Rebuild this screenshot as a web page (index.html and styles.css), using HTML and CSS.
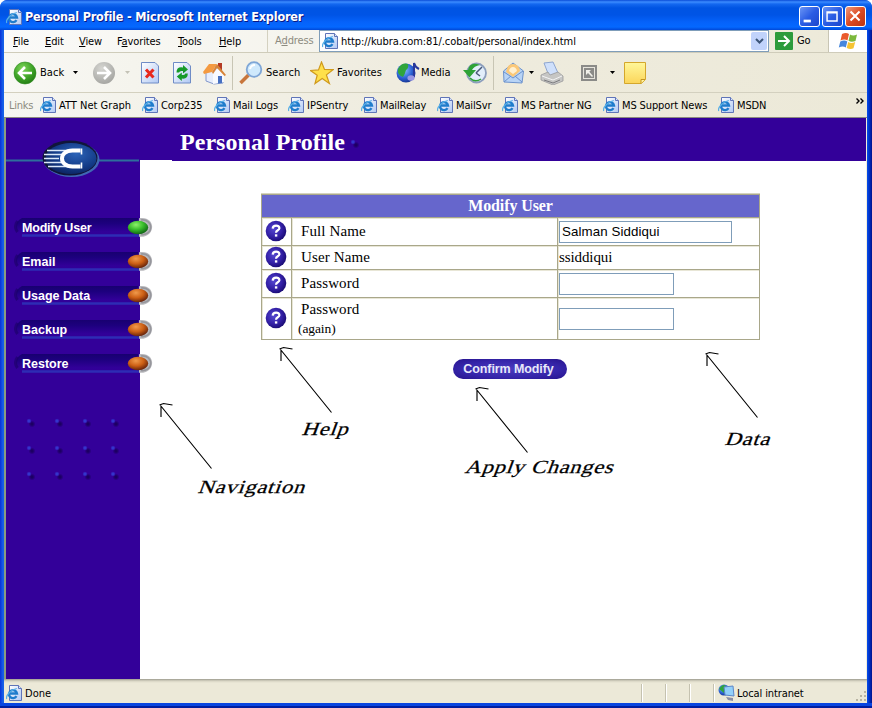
FILE: index.html
```html
<!DOCTYPE html>
<html lang="en">
<head>
<meta charset="utf-8">
<title>Personal Profile - Microsoft Internet Explorer</title>
<link rel="stylesheet" href="styles.css">
</head>
<body>
<svg class="defs" width="0" height="0">
  <defs>
    <radialGradient id="gGreen" cx=".4" cy=".3" r=".75"><stop offset="0" stop-color="#7fd65a"/><stop offset=".6" stop-color="#3da226"/><stop offset="1" stop-color="#227a14"/></radialGradient>
    <radialGradient id="gGrey" cx=".4" cy=".3" r=".75"><stop offset="0" stop-color="#d6d6d2"/><stop offset="1" stop-color="#a4a4a0"/></radialGradient>
    <radialGradient id="gHelp" cx=".4" cy=".4" r=".65"><stop offset="0" stop-color="#5548d0"/><stop offset=".6" stop-color="#3320a6"/><stop offset="1" stop-color="#180a70"/></radialGradient>
    <radialGradient id="gLogo" cx=".6" cy=".35" r=".75"><stop offset="0" stop-color="#2c64b8"/><stop offset=".6" stop-color="#133a86"/><stop offset="1" stop-color="#0a1e58"/></radialGradient>
    <radialGradient id="ledOn" cx=".4" cy=".3" r=".7"><stop offset="0" stop-color="#8df06c"/><stop offset=".5" stop-color="#3bbf2c"/><stop offset="1" stop-color="#0f6414"/></radialGradient>
    <radialGradient id="ledOff" cx=".4" cy=".3" r=".75"><stop offset="0" stop-color="#f09a4c"/><stop offset=".5" stop-color="#cc5f14"/><stop offset="1" stop-color="#571a0a"/></radialGradient>
    <radialGradient id="gGlobe" cx=".4" cy=".35" r=".7"><stop offset="0" stop-color="#8cc4ff"/><stop offset=".6" stop-color="#2c62d4"/><stop offset="1" stop-color="#15308c"/></radialGradient>
    <linearGradient id="gPaper" x2="1" y2="1"><stop offset="0" stop-color="#fff"/><stop offset="1" stop-color="#b0c8f4"/></linearGradient>
    <linearGradient id="gNote" x2="0" y2="1"><stop offset="0" stop-color="#fff79a"/><stop offset="1" stop-color="#fbd55a"/></linearGradient>
    <linearGradient id="gSlot" x2="0" y2="1"><stop offset="0" stop-color="#180070"/><stop offset=".3" stop-color="#1d007e"/><stop offset=".75" stop-color="#310098"/><stop offset="1" stop-color="#330099"/></linearGradient>
  </defs>
  <symbol id="ie" viewBox="0 0 16 16">
    <path d="M3.500.5h9l3 3v12h-12z" fill="url(#gPaper)" stroke="#5f74b8"/>
    <path d="M12.500.5v3h3" fill="#dce6fa" stroke="#5f74b8"/>
    <path d="M10.500 11.200A4 4 0 1 1 11 8.500H3.500" fill="none" stroke="#1f7ccc" stroke-width="2.300"/>
    <path d="M.8 14c-1.500-3 4-9.500 10-10.500" fill="none" stroke="#58aee6" stroke-width="1.200"/>
  </symbol>
  <symbol id="caret" viewBox="0 0 5 3"><path d="M0 0h5L2.500 3z" fill="currentColor"/></symbol>
  <symbol id="help" viewBox="0 0 22 22">
    <circle cx="11" cy="11" r="10.300" fill="url(#gHelp)"/>
    <path d="M7.700 8.600c.2-4 6.800-3.800 6.700-.4-.1 2.200-3.400 2-3.400 4.500" fill="none" stroke="#fff" stroke-width="2.200"/>
    <rect x="9.900" y="14.300" width="2.400" height="2.300" fill="#fff"/>
  </symbol>
  <symbol id="slot" viewBox="0 0 142 24">
    <path d="M8 2h116v18H8q-6-3-6-9t6-9z" fill="url(#gSlot)"/>
    <path d="M3.500 5q-4 6 0 11" fill="none" stroke="#1a0066" stroke-width="3" opacity=".6"/>
    <path d="M8 19.500h118" stroke="#2e2cb4" stroke-width="2.500"/>
    <path d="M125 2.300c17.500-3 17.500 20 0 18.500z" fill="#b8b8bc"/>
    <path d="M127 4c13-1.500 13 16 0 14.500" fill="none" stroke="#96969c" stroke-width="1.600"/>
  </symbol>
  <symbol id="pointer" viewBox="0 0 56 70">
    <path d="M53.500 67.500L2.500 4.500M1.500 4l4-1.500 9 1.500M3 5v11" fill="none" stroke="#000" stroke-width="1.150"/>
  </symbol>
</svg>

<div class="window">
  <header class="titlebar">
    <svg class="ie"><use href="#ie"/></svg>
    <h1>Personal Profile - Microsoft Internet Explorer</h1>
    <div class="controls">
      <span class="ctl"><svg viewBox="0 0 21 21"><rect x="4" y="14" width="8" height="3" fill="#fff"/></svg></span>
      <span class="ctl"><svg viewBox="0 0 21 21"><path d="M4.500 5.500h11v10h-11zM4 6.500h12" fill="none" stroke="#fff" stroke-width="1.600"/></svg></span>
      <span class="ctl close"><svg viewBox="0 0 21 21"><path d="M5 5l10 10M15 5L5 15" stroke="#fff" stroke-width="2.300"/></svg></span>
    </div>
  </header>

  <nav class="menubar">
    <span><u>F</u>ile</span><span><u>E</u>dit</span><span><u>V</u>iew</span><span>F<u>a</u>vorites</span><span><u>T</u>ools</span><span><u>H</u>elp</span>
    <span class="addr-label">A<u>d</u>dress</span>
    <div class="addr">
      <svg class="ie"><use href="#ie"/></svg><span class="url">http://kubra.com:81/.cobalt/personal/index.html</span>
      <i class="drop"><svg viewBox="0 0 9 6"><path d="M1 1l3.500 3.500L8 1" fill="none" stroke="#3c5578" stroke-width="2"/></svg></i>
    </div>
    <div class="go"><svg viewBox="0 0 18 18"><rect width="18" height="18" rx="1" fill="#2c9b3c"/><path d="M3 9h11M9 4l5 5-5 5" fill="none" stroke="#fff" stroke-width="2"/></svg>Go</div>
    <div class="flag"><svg viewBox="0 0 20 18"><path d="M4 2q4-2 7 0L9.500 8.500q-3-2-7 0z" fill="#ea5a2c"/><path d="M12 2.500q3 2 7 0L17.500 9q-4 1.500-7-.2z" fill="#7cb83c"/><path d="M2.300 9.500q4-2 7 0L7.800 15.500q-3-2-7 0z" fill="#4686dc"/><path d="M10.200 10q3 2 7 0l-1.700 6.300q-3 1.700-6.800-.3z" fill="#f6c332"/></svg></div>
  </nav>

  <div class="toolbar">
    <svg class="i24" viewBox="0 0 24 24"><circle cx="12" cy="12" r="11" fill="url(#gGreen)" stroke="#2c8a1c" stroke-width=".6"/><path d="M19 12H6.500M12 6l-6 6 6 6" fill="none" stroke="#fff" stroke-width="2.600"/></svg>
    <span class="t-back">Back</span>
    <svg class="caret"><use href="#caret"/></svg>
    <svg class="i24" viewBox="0 0 24 24"><circle cx="12" cy="12" r="11" fill="url(#gGrey)"/><path d="M5 12h12.500M12 6l6 6-6 6" fill="none" stroke="#fff" stroke-width="2.600"/></svg>
    <svg class="caret dim"><use href="#caret"/></svg>
    <svg class="i24" viewBox="0 0 24 24"><path d="M1.500 1.500H15l3.500 3.500v17h-17z" fill="url(#gPaper)" stroke="#6f8cc6"/><path d="M6 8.500l7.500 8M13.500 8.500L6 16.500" stroke="#e8281c" stroke-width="3"/></svg>
    <svg class="i24" viewBox="0 0 24 24"><path d="M1.500 1.500H15l3.500 3.500v17h-17z" fill="url(#gPaper)" stroke="#6f8cc6"/><path d="M4.500 11.500q0-6 6.500-5V4l5 4.500-5 4V10q-3.500-.5-4 1.500zM15.800 12.500q0 6-6 5V20l-5-4.500 5-4V14q3 .5 3.500-1.500z" fill="#169a28"/></svg>
    <svg class="i24" viewBox="0 0 24 24"><path d="M16 2h4v7h-4z" fill="#b43a24"/><path d="M4 12l8-8 9 10v8l-9 1-8-3z" fill="#e6edfc" stroke="#8298cc"/><path d="M11 13l5-6 6 7v7l-11 2z" fill="#f8faff"/><path d="M7 3h8l-5 8-8 2-1-2z" fill="#f49a40"/><path d="M15 3l9 11-1.500 1L15 7l-4 6-1-2z" fill="#d88438"/><path d="M16 15h4v7l-4 .6z" fill="#4670c2"/></svg>
    <i class="sep"></i>
    <svg class="i24" viewBox="0 0 24 24"><path d="M1.500 22l8-8" stroke="#c8763c" stroke-width="3.600"/><circle cx="15" cy="8.500" r="7.300" fill="#cfe9fc" stroke="#7fa6d6" stroke-width="1.800"/><path d="M11 8q1-4 5-4" stroke="#fff" stroke-width="2" fill="none"/></svg>
    <span class="t-search">Search</span>
    <svg class="i24" viewBox="0 0 24 24"><path d="M11.500 1l3 7.500 8.500.2-6.600 5.200 3 8.600-7.200-5L5 22.500l2.200-8.300L.5 9.500l8-.6z" fill="#ffe04a" stroke="#d09a1c" stroke-width="1.200"/></svg>
    <span class="t-fav">Favorites</span>
    <svg class="i24" viewBox="0 0 24 24"><circle cx="10" cy="12" r="9.500" fill="url(#gGlobe)"/><path d="M2 8q4-7 10-5 1 4-2 6-1 4-3 7-6-2-5-8z" fill="#2fa53c"/><path d="M18 16V2q1 4 5 6" fill="none" stroke="#27389c" stroke-width="2"/><ellipse cx="15" cy="17" rx="3.600" ry="2.800" fill="#9a98e4"/></svg>
    <span class="t-media">Media</span>
    <svg class="i24" viewBox="0 0 24 24"><circle cx="13.500" cy="12" r="9.500" fill="#e2eefa" stroke="#8c9ebc" stroke-width="1.800"/><path d="M13 12l6-6M13 12l4 3" stroke="#4a5878" stroke-width="1.500"/><path d="M17 4Q7 0 5 9H0l6.500 7.500L13 9H9q2-4 8-5z" fill="#2ea336"/><path d="M7 17q5 5 11 1" stroke="#2ea336" stroke-width="1.500" fill="none"/></svg>
    <i class="sep"></i>
    <svg class="i24" viewBox="0 0 24 24"><path d="M1.500 10L11 2l10.500 8-1.500 12L2 21z" fill="#b8d4f6" stroke="#6c92cc"/><path d="M4 11q1-8 7-8t7 7l-7 6z" fill="#fbc878"/><path d="M7 10q1-4 4-4t4 4l-4 3z" fill="#fff0d0"/><path d="M2 11l9 6 10-7M2 21l7-6M20 21l-7-6" fill="none" stroke="#6c92cc"/></svg>
    <svg class="caret"><use href="#caret"/></svg>
    <svg class="i24" viewBox="0 0 24 24"><path d="M4 2l9-1 5 11-9 3z" fill="#cfe0fb" stroke="#8ea6d0"/><path d="M1 14l7-3 2 3 8-3 5 4v5l-10 4-12-5z" fill="#c6c6c4" stroke="#9a9a9c" stroke-width=".8"/><path d="M2 15l11 4 9-4" stroke="#f4f4f4" fill="none"/><path d="M4 19l9 3 7-3" stroke="#7b7b7e" fill="none"/></svg>
    <svg class="i24" viewBox="0 0 24 24"><rect x="1" y="4" width="16" height="16" fill="#8b8b88"/><rect x="3.500" y="6.500" width="11" height="11" fill="none" stroke="#e6e4dc"/><path d="M6 9h5l-1.700 1.700L13 15l-1 1-4-4-2 2z" fill="#f2f1ea"/></svg>
    <svg class="caret"><use href="#caret"/></svg>
    <svg class="i24" viewBox="0 0 24 24"><path d="M1.500 1.500h21v17l-4 4h-17z" fill="url(#gNote)" stroke="#d4a72c"/><path d="M22 18.500h-4v4" fill="#fff3a0" stroke="#c49420"/></svg>
  </div>

  <div class="links">
    <span class="lbl">Links</span>
    <a><svg class="ie"><use href="#ie"/></svg><span class="wider">ATT Net Graph</span></a>
    <a><svg class="ie"><use href="#ie"/></svg><span>Corp235</span></a>
    <a><svg class="ie"><use href="#ie"/></svg><span>Mail Logs</span></a>
    <a><svg class="ie"><use href="#ie"/></svg><span class="wider">IPSentry</span></a>
    <a><svg class="ie"><use href="#ie"/></svg><span>MailRelay</span></a>
    <a><svg class="ie"><use href="#ie"/></svg><span>MailSvr</span></a>
    <a><svg class="ie"><use href="#ie"/></svg><span>MS Partner NG</span></a>
    <a><svg class="ie"><use href="#ie"/></svg><span>MS Support News</span></a>
    <a><svg class="ie"><use href="#ie"/></svg><span>MSDN</span></a>
    <svg class="more" viewBox="0 0 8 6"><path d="M.5.5L3 3 .5 5.500M4.500.5L7 3 4.500 5.500" fill="none" stroke="#000" stroke-width="1.400"/></svg>
  </div>

  <div class="page">
    <aside class="sidebar">
      <div class="brand">
        <svg viewBox="0 0 133 44"><path d="M0 24.500h133" stroke="#2e6e9c" stroke-width="2"/>
          <ellipse cx="65.500" cy="23.500" rx="28" ry="17.500" fill="#4068b4"/><ellipse cx="64" cy="22" rx="27.500" ry="17.500" fill="#10163a"/>
          <ellipse cx="65" cy="22.500" rx="25.500" ry="15.500" fill="url(#gLogo)"/>
          <path d="M41 14.500h28M38 18.500h18M38 22.500h15M38 26.500h18M42 30.500h27" stroke="#dbe8f8" stroke-width="1.300"/>
          <path d="M74.500 14.500h-8c-14 0-14 16 0 16h8" fill="none" stroke="#fff" stroke-width="4"/><path d="M75.500 12.500v6M75.500 26.500v6" stroke="#fff" stroke-width="1.600"/></svg>
      </div>
      <ul class="nav">
        <li><svg class="slot"><use href="#slot"/><ellipse cx="124" cy="11.500" rx="10.200" ry="6.800" fill="url(#ledOn)"/></svg><b class="tight">Modify User</b></li>
        <li><svg class="slot"><use href="#slot"/><ellipse cx="124" cy="11.500" rx="10.200" ry="6.800" fill="url(#ledOff)"/></svg><b>Email</b></li>
        <li><svg class="slot"><use href="#slot"/><ellipse cx="124" cy="11.500" rx="10.200" ry="6.800" fill="url(#ledOff)"/></svg><b>Usage Data</b></li>
        <li><svg class="slot"><use href="#slot"/><ellipse cx="124" cy="11.500" rx="10.200" ry="6.800" fill="url(#ledOff)"/></svg><b>Backup</b></li>
        <li><svg class="slot"><use href="#slot"/><ellipse cx="124" cy="11.500" rx="10.200" ry="6.800" fill="url(#ledOff)"/></svg><b>Restore</b></li>
      </ul>
      <div class="dots"><i></i><i></i><i></i><i></i><i></i><i></i><i></i><i></i><i></i><i></i><i></i><i></i></div>
    </aside>
    <main>
      <div class="banner"><h2>Personal Profile</h2><i class="dot"></i></div>
      <table>
        <colgroup><col class="c1"><col class="c2"><col class="c3"></colgroup>
        <tr class="r0"><th colspan="3"><span>Modify User</span></th></tr>
        <tr class="r1"><td><svg class="help"><use href="#help"/></svg></td><td class="name"><span>Full Name</span></td><td><div class="field wide"><span>Salman Siddiqui</span></div></td></tr>
        <tr class="r2"><td><svg class="help"><use href="#help"/></svg></td><td class="name"><span>User Name</span></td><td class="val"><span>ssiddiqui</span></td></tr>
        <tr class="r3"><td><svg class="help"><use href="#help"/></svg></td><td class="name"><span>Password</span></td><td><div class="field"></div></td></tr>
        <tr class="r4"><td><svg class="help"><use href="#help"/></svg></td><td class="name again"><span>Password</span><small>(again)</small></td><td><div class="field"></div></td></tr>
      </table>
      <div class="confirm"><b>Confirm Modify</b></div>
    </main>
  </div>

  <footer class="status">
    <svg class="ie"><use href="#ie"/></svg><span class="done">Done</span>
    <i></i><i></i><i></i>
    <div class="zone"><svg viewBox="0 0 18 18"><circle cx="6" cy="6" r="5.500" fill="url(#gGlobe)"/><path d="M1 5q4-6 7-3l-2 7z" fill="#2fa53c"/><path d="M6 3l9-1 1 10-9-1z" fill="#92d0fa" stroke="#5c86c8"/><path d="M8 13l7 1v3l-5-1z" fill="#8a8fa6"/></svg><span class="local">Local intranet</span></div>
    <svg class="grip" viewBox="0 0 12 12"><path d="M9 0h2v2H9zM9 4h2v2H9zM9 8h2v2H9zM5 4h2v2H5zM5 8h2v2H5zM1 8h2v2H1z" fill="#b8b4a2"/></svg>
  </footer>
</div>

<svg class="pointer p-nav"><use href="#pointer"/></svg><em class="note n-nav">Navigation</em>
<svg class="pointer p-help"><use href="#pointer"/></svg><em class="note n-help">Help</em>
<svg class="pointer p-apply"><use href="#pointer"/></svg><em class="note n-apply">Apply Changes</em>
<svg class="pointer p-data"><use href="#pointer"/></svg><em class="note n-data">Data</em>
</body>
</html>
```
FILE: styles.css
```css
* { box-sizing: border-box; }
body { margin: 0; width: 872px; height: 708px; overflow: hidden; position: relative; background: #fff; }
.defs { position: absolute; }
svg { display: block; flex: none; }
i, em { font-style: normal; }

.window {
  width: 872px; height: 708px; padding: 0 5px 5px 4px;
  display: flex; flex-direction: column;
  background: linear-gradient(90deg, #0831d9 0, #1660e8 3px, #1660e8 4px, #0a4fe8 5px, #0a4fe8 867px, #0040e0 868px, #001ea0 871px, #00138c);
  border-radius: 8px 8px 0 0;
  box-shadow: inset 0 -2px #001ea0, inset 0 -5px #0845e0;
  font: 11px/14px "DejaVu Sans Condensed", "Noto Sans", sans-serif;
  color: #000;
}
.ie { width: 16px; height: 16px; }

.titlebar {
  height: 30px; flex: none; margin: 0 -5px 0 -4px; padding: 3px 6px 0 6px;
  display: flex; align-items: center;
  border-radius: 7px 7px 0 0;
  background: linear-gradient(#0a4cd8 0, #3c8cff 2px, #1468f0 4px, #0054e3 8px, #0054e6 15px, #0562fa 22px, #0468ff 27px, #0048d8 30px);
}
.titlebar h1 {
  margin: 1px 0 0 3px; flex: 1; color: #fff; white-space: nowrap;
  font: bold 12.500px/16px "DejaVu Sans Condensed", sans-serif; letter-spacing: -.17px;
  text-shadow: 1px 1px #0a1883;
}
.controls { display: flex; gap: 2px; }
.ctl { width: 21px; height: 21px; border: 1px solid #fff; border-radius: 3px; background: linear-gradient(135deg, #6b95f5, #2a5ce4 50%, #1c46cc); }
.ctl svg { width: 19px; height: 19px; }
.close { background: linear-gradient(135deg, #f09a7c, #dc4a22 50%, #bc3410); }

.menubar {
  height: 23px; flex: none; display: grid; align-items: center; padding-left: 9px;
  grid-template-columns: 32px 34px 38px 61px 41px 48px 52px 450px 59px 39px;
  background: linear-gradient(90deg, #fafaf8, #ece9d8); border-bottom: 1px solid #cfccba;
  white-space: nowrap; letter-spacing: -.12px;
}
.menubar > span { padding-top: 1px; }
.menubar u { text-underline-offset: 1px; text-decoration-thickness: 1px; }
.menubar .addr-label { color: #8d8b80; border-left: 1px solid #d4d1c0; padding: 0 0 0 7px; line-height: 22px; }
.addr { height: 22px; border: 1px solid #7f9db9; background: #fff; display: flex; align-items: center; padding-left: 2px; }
.url { flex: 1; margin: 1px 0 0 3px; letter-spacing: -.06px; }
.drop { width: 16px; height: 18px; margin-right: 1px; background: #c1d3fb; border-radius: 2px; display: grid; place-items: center; }
.drop svg { width: 9px; height: 6px; }
.go { display: flex; align-items: center; gap: 4px; padding-left: 6px; }
.go svg { width: 18px; height: 18px; }
.flag { height: 22px; background: #fff; border-left: 1px solid #c8c5b4; display: grid; place-items: center; }
.flag svg { width: 20px; height: 18px; }

.toolbar {
  height: 40px; flex: none; display: grid; align-items: center; padding-left: 9px;
  grid-template-columns: 27px 33px 19px 33px 15px 32px 30px 30px 7px 26px 45px 27px 59px 25px 42px 30px 9px 27px 11px 40px 30px 13px 24px;
  background: linear-gradient(90deg, #f8f8f4, #efecdf 45%, #ece9d8); border-bottom: 1px solid #d3d0bf;
  white-space: nowrap;
}
.toolbar span { padding-top: 1px; }
.t-back, .t-search { letter-spacing: .05px; }
.t-search { padding-left: 1px; }
.t-fav { letter-spacing: .03px; }
.t-media { letter-spacing: -.05px; }
.i24 { width: 24px; height: 24px; }
.caret { width: 5px; height: 3px; color: #000; }
.dim { color: #c4c2b6; }
.sep { width: 1px; height: 34px; background: #c8c5b4; }

.links {
  height: 25px; flex: none; display: grid; align-items: center; padding-left: 5px;
  grid-template-columns: 31px 102px 72px 74px 73px 76px 65px 101px 115px 138px 10px;
  background: linear-gradient(90deg, #f6f6f1, #efecdf 45%, #ece9d8); border-bottom: 1px solid #8c8a80;
  white-space: nowrap; letter-spacing: -.12px;
}
.links span { padding-top: 1px; }
.links .lbl { color: #8d8b80; letter-spacing: -.25px; }
.links a { display: flex; gap: 3px; align-items: center; }
.wider { letter-spacing: .02px; }
.more { width: 8px; height: 6px; margin-top: -8px; }

.page { flex: 1; display: flex; background: #fff; border-left: 2px solid #8a9c80; border-right: 1px solid #f2eedc; min-height: 0; }
.sidebar { width: 134px; flex: none; background: #330099; display: flex; flex-direction: column; }
.brand { height: 62px; padding-top: 18px; }
.brand svg { width: 133px; height: 44px; }
.nav { list-style: none; margin: 36px 0 0 8px; padding: 0; width: 142px; position: relative; }
.nav li { height: 34px; display: grid; align-items: start; }
.nav li > * { grid-area: 1 / 1; }
.slot { width: 142px; height: 24px; }
.nav b { position: relative; margin: 4px 0 0 8px; color: #fff; font: bold 12.500px/16px "Liberation Sans", sans-serif; }
.nav .tight { letter-spacing: -.2px; }
.dots { margin: 32px 0 0 20px; display: grid; grid-template-columns: repeat(4, 28px); grid-auto-rows: 26.500px; }
.dots i, .dot {
  width: 9px; height: 9px;
  background: radial-gradient(circle at 3px 3px, #3434cc 1px, #3311a800 2.600px), radial-gradient(circle at 6px 6px, #1c0062 1px, #1c006200 3.500px);
}

main { flex: 1; display: flex; flex-direction: column; min-width: 0; }
.banner { height: 43px; background: #330099; flex: none; display: flex; align-items: center; padding: 5px 0 0 40px; clip-path: polygon(0 0, 100% 0, 100% 100%, 32px 100%, 32px 42px, 0 42px); }
.banner h2 { margin: 0; color: #fff; font: bold 24px/28px "Liberation Serif", serif; letter-spacing: .05px; white-space: nowrap; }
.dot { margin: 3px 0 0 5px; }

table { margin: 33px 0 0 121px; width: 499px; table-layout: fixed; border-collapse: collapse; border: 1px solid #a9a78a; box-shadow: 0 -1px #d5d3be; font: 15px/18px "Liberation Serif", serif; }
.c1 { width: 30px; } .c2 { width: 266px; } .c3 { width: 202px; }
td, th { border: 1px solid #a9a78a; padding: 0; box-shadow: inset 1px 1px #e8e6d6; }
th { background: #6666cc; color: #fff; font-size: 16px; letter-spacing: -.1px; box-shadow: none; }
.r0 { height: 23px; } .r1 { height: 28px; } .r2 { height: 24px; } .r3 { height: 28px; } .r4 { height: 42px; }
.help { width: 22px; height: 22px; margin: -2px auto 0 3px; }
td.name { padding: 0 0 2px 9px; letter-spacing: .12px; }
td.again { padding: 0 0 0 9px; }
.name small { display: block; font-size: 13.500px; letter-spacing: -.1px; margin: 2px 0 0 -3px; line-height: 18px; }
.field { width: 115px; height: 22px; margin: 1px 0 0 1px; border: 1px solid #7f9db9; background: #fff; }
.wide { width: 173px; font: 13.300px/20px "Liberation Sans", sans-serif; padding-left: 2px; letter-spacing: .1px; }
td.val { padding: 0 0 2px 1px; letter-spacing: -.1px; }

.confirm { width: 114px; height: 20px; margin: 19px 0 0 313px; border-radius: 10px; text-align: center; color: #e8e8fa; background: radial-gradient(ellipse at center, #4a3cc0, #3626aa 60%, #26128c); font: bold 12.500px/20px "Liberation Sans", sans-serif; letter-spacing: -.1px; padding-right: 3px; white-space: nowrap; }

.status { height: 24px; flex: none; display: flex; align-items: center; padding: 3px 0 0 2px; background: linear-gradient(#9c9a8e 0, #d8d5c4 2px, #ece9d8 4px, #ece9d8); letter-spacing: -.1px; white-space: nowrap; }
.done { width: 616px; margin: 2px 0 0 3px; letter-spacing: .05px; }
.status i { width: 24px; height: 18px; border-left: 1px solid #c5c2b0; box-shadow: inset 1px 0 #fff; }
.zone { flex: 1; display: flex; align-items: center; gap: 1px; height: 18px; border-left: 1px solid #c5c2b0; box-shadow: inset 1px 0 #fff; padding-left: 4px; }
.zone svg { width: 18px; height: 18px; }
.local { padding-top: 2px; }
.grip { width: 12px; height: 12px; align-self: flex-end; }

/* Callouts drawn over the window */
.pointer { position: absolute; width: 56px; height: 70px; }
.p-nav { left: 158px; top: 401px; }
.p-help { left: 278px; top: 345px; }
.p-apply { left: 474px; top: 385px; }
.p-data { left: 704px; top: 350px; }
.note { position: absolute; white-space: nowrap; color: #000; font: 18.500px/24px "Liberation Serif", serif; letter-spacing: .55px; transform-origin: 0 19px; transform: scaleX(1.22) skewX(-17deg); -webkit-text-stroke: .25px #000; }
.n-nav { left: 197px; top: 475px; }
.n-help { left: 301px; top: 417px; }
.n-apply { left: 464px; top: 455px; }
.n-data { left: 724px; top: 427px; }
```
